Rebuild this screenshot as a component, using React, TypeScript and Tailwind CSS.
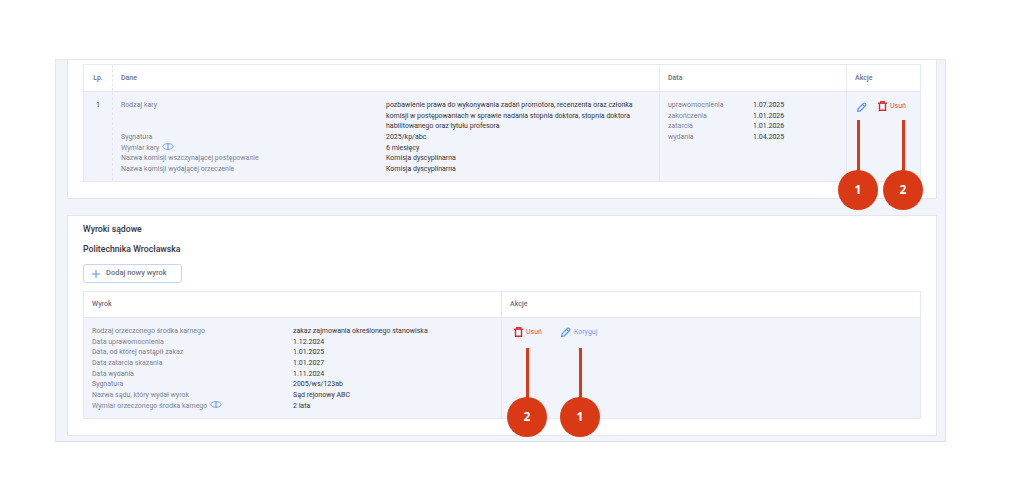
const label = 'text-[#80838f]'
const value = 'text-[#33343c]'

function InfoIcon() {
    return (
        <svg width="12" height="7" viewBox="0 0 12 7" fill="none" className="inline-block ml-[3px] -mt-[2px]">
            <ellipse cx="6" cy="3.5" rx="5.2" ry="2.9" stroke="#5b8def" strokeWidth="0.8" />
            <path d="M6 .6v5.8" stroke="#5b8def" strokeWidth="1" />
        </svg>
    )
}

function PencilIcon() {
    return (
        <svg width="10" height="10" viewBox="0 0 12 12" fill="none" stroke="#5b8def" strokeWidth="1.5" strokeLinejoin="round">
            <path d="M1.2 8.2 7.7 1.7a1.4 1.4 0 0 1 2 0l.6.6a1.4 1.4 0 0 1 0 2L3.8 10.8l-2.9.4z" />
            <path d="M6.6 2.8l2.6 2.6" />
        </svg>
    )
}

function TrashIcon() {
    return (
        <svg width="9" height="10" viewBox="0 0 9 10" fill="none" stroke="#e0282e" strokeWidth="1.4">
            <path d="M0 2.2h9" />
            <path d="M2.8 2V.7h3.4V2" />
            <path d="M1.5 2.2v7.1h6V2.2" />
        </svg>
    )
}

function Row({ name, children, info, w }: { name: string; children: React.ReactNode; info?: boolean; w: string }) {
    return (
        <div className="flex">
            <div className={`${w} shrink-0 ${label}`}>
                {name}
                {info && <InfoIcon />}
            </div>
            <div className={`flex-1 ${value}`}>{children}</div>
        </div>
    )
}

function Marker({ n, className }: { n: number; className: string }) {
    return (
        <div className={`absolute flex flex-col items-center w-10 ${className}`}>
            <div className="w-[3px] flex-1 bg-[#da3915]" />
            <div className="w-10 h-10 -mt-px shrink-0 rounded-full bg-[#da3915] flex items-center justify-center text-white text-[12px] leading-none font-bold font-['Open_Sans',sans-serif]">
                {n}
            </div>
        </div>
    )
}

export default function App() {
    return (
        <main className="relative w-[1024px] h-[504px] overflow-hidden bg-white pt-[59px] pl-[55px] font-['Roboto',sans-serif] text-[7px] leading-[10.67px]">
            <div className="w-[891px] h-[383px] bg-[#f1f4fb] border border-t-[#e6e8ee] border-x-[#e3e6ee] border-b-[#d9dce4] pl-[11px] pr-2">
                <div className="h-[139px] bg-white border-x border-b border-[#e3e6ee] px-[15px] pt-[4px]">
                    <div className="border border-[#e6e9f0] bg-[#f1f4fb] h-[118px]">
                        <div className="flex h-[27px] bg-white border-b border-[#e3e6ee] font-medium text-[#6b6f80]">
                            <div className="w-[29px] flex items-center justify-center border-r border-dashed border-[#e3e6ee]">Lp.</div>
                            <div className="w-[547px] flex items-center pl-2 border-r border-[#e9ebf1]">Dane</div>
                            <div className="w-[187px] flex items-center pl-2 border-r border-[#e9ebf1]">Data</div>
                            <div className="flex items-center pl-2">Akcje</div>
                        </div>
                        <div className="flex h-[89px]">
                            <div className="w-[29px] pt-2 text-center text-[#33343c] border-r border-dashed border-[#e3e6ee]">1</div>
                            <div className="w-[547px] pl-2 pt-2 border-r border-[#e3e6ee]">
                                <Row name="Rodzaj kary" w="w-[265px]">
                                    pozbawienie prawa do wykonywania zadań promotora, recenzenta oraz członka
                                    <br />
                                    komisji w postępowaniach w sprawie nadania stopnia doktora, stopnia doktora
                                    <br />
                                    habilitowanego oraz tytułu profesora
                                </Row>
                                <Row name="Sygnatura" w="w-[265px]">2025/kp/abc</Row>
                                <Row name="Wymiar kary" info w="w-[265px]">6 miesięcy</Row>
                                <Row name="Nazwa komisji wszczynającej postępowanie" w="w-[265px]">Komisja dyscyplinarna</Row>
                                <Row name="Nazwa komisji wydającej orzeczenie" w="w-[265px]">Komisja dyscyplinarna</Row>
                            </div>
                            <div className="w-[187px] pl-2 pt-2 border-r border-[#e3e6ee]">
                                <Row name="uprawomocnienia" w="w-[85px]">1.07.2025</Row>
                                <Row name="zakończenia" w="w-[85px]">1.01.2026</Row>
                                <Row name="zatarcia" w="w-[85px]">1.01.2026</Row>
                                <Row name="wydania" w="w-[85px]">1.04.2025</Row>
                            </div>
                            <div className="flex items-start pl-[10px] pt-[10px] gap-[11px]">
                                <PencilIcon />
                                <div className="flex items-center gap-[3px] -mt-px text-[#e24a4f]">
                                    <TrashIcon />
                                    Usuń
                                </div>
                            </div>
                        </div>
                    </div>
                </div>

                <div className="mt-4 h-[221px] bg-white border border-[#e3e6ee] px-[15px] pt-[7px]">
                    <div className="text-[8.7px] leading-[12px] font-medium text-[#33343c]">Wyroki sądowe</div>
                    <div className="mt-2 text-[8.7px] leading-[12px] font-medium text-[#33343c]">Politechnika Wrocławska</div>
                    <div className="mt-[9px] w-[99px] h-[19px] flex items-center pl-2 gap-[6px] bg-white border border-[#c5d5f5] rounded-[3px] text-[7.5px] font-medium text-[#6b6f80]">
                        <svg width="8" height="8" viewBox="0 0 8 8" stroke="#5b8def" strokeWidth="1">
                            <path d="M4 0v8M0 4h8" />
                        </svg>
                        Dodaj nowy wyrok
                    </div>
                    <div className="mt-[8px] border border-[#e6e9f0] bg-[#f1f4fb] h-[128px]">
                        <div className="flex h-[26px] bg-white border-b border-[#e3e6ee] font-medium text-[#6b6f80] items-center">
                            <div className="w-[418px] pl-2 h-full flex items-center border-r border-[#e3e6ee]">Wyrok</div>
                            <div className="pl-2">Akcje</div>
                        </div>
                        <div className="flex h-[100px]">
                            <div className="w-[418px] pl-2 pt-2 border-r border-[#e3e6ee]">
                                <Row name="Rodzaj orzeczonego środka karnego" w="w-[201px]">zakaz zajmowania określonego stanowiska</Row>
                                <Row name="Data uprawomocnienia" w="w-[201px]">1.12.2024</Row>
                                <Row name="Data, od której nastąpił zakaz" w="w-[201px]">1.01.2025</Row>
                                <Row name="Data zatarcia skazania" w="w-[201px]">1.01.2027</Row>
                                <Row name="Data wydania" w="w-[201px]">1.11.2024</Row>
                                <Row name="Sygnatura" w="w-[201px]">2005/ws/123ab</Row>
                                <Row name="Nazwa sądu, który wydał wyrok" w="w-[201px]">Sąd rejonowy ABC</Row>
                                <Row name="Wymiar orzeczonego środka karnego" info w="w-[201px]">2 lata</Row>
                            </div>
                            <div className="flex items-start pl-3 pt-[9px] gap-[19px]">
                                <div className="flex items-center gap-[3px] text-[#e24a4f]">
                                    <TrashIcon />
                                    Usuń
                                </div>
                                <div className="flex items-center gap-[3px] text-[#6f9cf5]">
                                    <PencilIcon />
                                    Koryguj
                                </div>
                            </div>
                        </div>
                    </div>
                </div>
            </div>

            <Marker n={1} className="left-[838px] top-[120px] h-[90px]" />
            <Marker n={2} className="left-[883px] top-[120px] h-[90px]" />
            <Marker n={2} className="left-[507px] top-[348px] h-[89px]" />
            <Marker n={1} className="left-[560px] top-[348px] h-[89px]" />
        </main>
    )
}
